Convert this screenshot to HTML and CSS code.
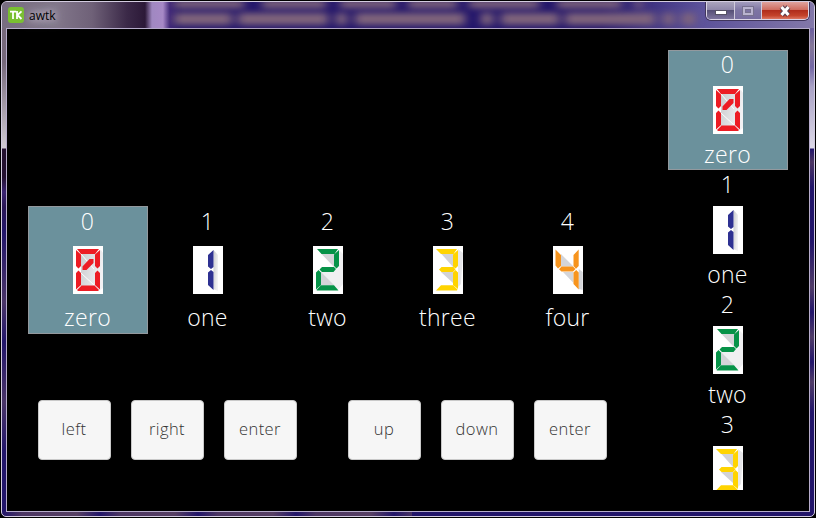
FILE: index.html
```html
<!DOCTYPE html>
<html lang="en">
<head>
<meta charset="utf-8">
<title>awtk</title>
<link rel="stylesheet" href="styles.css">
</head>
<body>
<svg class="defs" aria-hidden="true">
  <defs>
    <linearGradient id="shade" x1="0" y1="0" x2="1" y2="0.4"><stop offset="0" stop-color="#c9cacd"/><stop offset="1" stop-color="#f2f2f4"/></linearGradient>
    <symbol id="d0" viewBox="0 0 30 48">
      <path fill="#fff" d="M0 0h30v48H0z"/><path fill="url(#shade)" d="M8 8h13l7-4 2 3v35l-4 3H8z"/>
      <path stroke="#fff" d="M8 8l13 15M8 27l13 12"/>
      <path fill="#ed1c24" d="M4 3h22l-4 5H8zM3 4l5 4.500V20l-2.500 2.500L3 20zM27 4l-5 4.500V20l2.500 2.500L27 20zM3 27l2.500-2.500L8 27v12l-5 4.500zM27 27l-2.500-2.500L22 27v12l5 4.500zM4 44l4.500-4.500h13L26 44l-1 1H5zM9.500 24v-3.500l7-7.500h4v4l-7 7z"/>
    </symbol>
    <symbol id="d1" viewBox="0 0 30 48">
      <path fill="#fff" d="M0 0h30v48H0z"/><path fill="url(#shade)" d="M20.500 4l4.500 5v36l-4.500-2z"/>
      <path fill="#2e3192" d="M20.500 4v17L18 23l-3-2.500V9zM18 24l2.500 2v18L15 39V26.500z"/>
    </symbol>
    <symbol id="d2" viewBox="0 0 30 48">
      <path fill="#fff" d="M0 0h30v48H0z"/><path fill="#f0f0f2" d="M26 4l4 4v30l-5 6-17-5V26h12l6-5z"/><path fill="#d3d4d7" d="M8.500 8H21v13zM8 26l13 13H8z"/>
      <path fill="#069348" d="M4 3h21l-3.500 5H8.500zM26 4v16l-2.500 2.500L21 20V8.500zM6.500 23.500L9 21h12l2 2-2.500 3H9zM5.500 24L8 26.500V39l-5 4.500V26.500zM3.500 44L8 39.200h13l4.500 5.300H4z"/>
    </symbol>
    <symbol id="d3" viewBox="0 0 30 48">
      <path fill="#fff" d="M0 0h30v48H0z"/><path fill="#e6e6e9" d="M25 3l5 4-2 31-3 3V26z"/><path fill="#d1d2d6" d="M8.500 8H20v13zM8 26h12v11z"/>
      <path fill="#ffd400" d="M3 3h21l-3.500 5H8zM25 4v16l-2.500 2.500L20 20.500v-12zM6 23.500L8.500 21h12l2 2.500-2.500 2.500H8.500zM22.500 24l2.500 2.500V43l-5-4V26.500zM3 44.500L8 39.200h12l4.500 4.300-.5 1z"/>
    </symbol>
    <symbol id="d4" viewBox="0 0 30 48">
      <path fill="#fff" d="M0 0h30v48H0z"/><path fill="#d4d5d9" d="M8 8l12.500 12.500H8zM25.700 23l4 3v18l-4-1zM10 26h10.500v11z"/>
      <path fill="#f7941d" d="M2.500 3.500L8 9v11l-3 2.500-2.500-3zM25.700 3.500L20.500 9v11l2.500 2.700 2.700-2.700zM6 23.200L8.500 20.600H20l2.500 2.500-2.500 2.500H8.500zM23.200 24l2.500 2.500v17L20.500 38V26.500z"/>
    </symbol>
  </defs>
</svg>
<div class="window">
  <header class="titlebar">
    <svg class="glass" width="812" height="27" aria-hidden="true">
      <defs><filter id="soft" x="-10%" y="-80%" width="120%" height="260%"><feGaussianBlur stdDeviation="5 3"/></filter></defs>
      <g filter="url(#soft)" stroke="#80657c" fill="none">
        <path stroke-width="8" stroke-dasharray="70 18 64 14 56 12 49 12" d="M172 2H640"/>
        <path stroke-width="12" stroke-dasharray="58 6 90 8 11 8 110 16 12 8" d="M172 17H693"/>
      </g>
    </svg>
    <svg class="logo" viewBox="0 0 16 16"><rect width="16" height="16" rx="3" fill="#79bf31"/><path d="M2 4.700h6M5 4.700V12M9 4v8M13.500 4.300L9.500 8l4 4" fill="none" stroke="#fff" stroke-width="1.800"/></svg>
    <span class="caption">awtk</span>
    <div class="controls">
      <span class="ctl min"><svg width="12" height="6"><rect x=".5" y=".5" width="11" height="4" fill="#fff" stroke="#565264"/></svg></span>
      <span class="ctl max"><svg width="12" height="10"><path d="M2 2h8v6H2z" fill="none" stroke="#77718f" stroke-width="4"/><path d="M2 2h8v6H2z" fill="none" stroke="#b9b3cf" stroke-width="2"/></svg></span>
      <span class="ctl close"><svg width="14" height="12"><path d="M3.500 2l7 8M10.500 2l-7 8" fill="none" stroke="#594050" stroke-width="5"/><path d="M3.500 2l7 8M10.500 2l-7 8" fill="none" stroke="#fff" stroke-width="3"/></svg></span>
    </div>
  </header>
  <main class="client">
    <section class="left">
      <div class="row">
        <div class="item selected"><span>0</span><svg><use href="#d0"/></svg><span>zero</span></div>
        <div class="item"><span>1</span><svg><use href="#d1"/></svg><span>one</span></div>
        <div class="item"><span>2</span><svg><use href="#d2"/></svg><span>two</span></div>
        <div class="item"><span>3</span><svg><use href="#d3"/></svg><span>three</span></div>
        <div class="item"><span>4</span><svg><use href="#d4"/></svg><span>four</span></div>
      </div>
      <div class="buttons">
        <div class="group"><button>left</button><button>right</button><button>enter</button></div>
        <div class="group"><button>up</button><button>down</button><button>enter</button></div>
      </div>
    </section>
    <section class="column">
      <div class="item selected"><span>0</span><svg><use href="#d0"/></svg><span>zero</span></div>
      <div class="item"><span>1</span><svg><use href="#d1"/></svg><span>one</span></div>
      <div class="item"><span>2</span><svg><use href="#d2"/></svg><span>two</span></div>
      <div class="item"><span>3</span><svg><use href="#d3"/></svg></div>
    </section>
  </main>
</div>
</body>
</html>
```
FILE: styles.css
```css
* { box-sizing: border-box; }
body {
  margin: 0;
  padding: 1px;
  width: 816px;
  height: 518px;
  overflow: hidden;
  background: #000;
  font-family: "Open Sans", "Noto Sans", sans-serif;
}
.defs { position: absolute; width: 0; height: 0; }
.window {
  width: 814px;
  height: 516px;
  border: 1px solid #d3cce0;
  border-radius: 6px 6px 5px 5px;
  overflow: hidden;
  padding: 0 4px 4px;
  background:
    linear-gradient(#776a7c 0, #75687a 60px, #d0cbd3 146px, #23102f 147px, #23102f 175px, #3b2472 190px, #2a1655 205px, #22156a 230px, #4a3568 300px, #22156a 340px, #4a3568 400px, #22156a 450px) 0 0 / 5px 505px no-repeat,
    linear-gradient(#81779e 0, #6d609e 28px, #857898 44px, #7468a5 65px, #aaa3c6 85px, #ddd9e8 146px, #22156a 147px, #4c3663 160px, #22156a 185px, #22156a 240px, #503c68 285px, #22156a 310px, #503c68 335px, #22156a 360px, #503c68 380px, #22156a 410px) 100% 0 / 5px 505px no-repeat,
    repeating-linear-gradient(90deg, #22156a 0, #4c3663 20px, #574064 75px, #22156a 98px) 0 100% / 410px 5px no-repeat,
    #22156a;
}
.titlebar {
  position: relative;
  display: flex;
  align-items: flex-start;
  height: 26px;
  margin: 0 -4px;
  background: linear-gradient(90deg, #776d80 0, #81768a 55px, #6f6178 90px, #3b2948 125px, #2c1938 143px, #a088c1 150px, #a789c6 161px, #3c2477 168px, #22156a 178px, #22156a 600px, #5c529a 700px, #8378a9 812px);
}
.glass { position: absolute; left: 0; top: 0; }
.logo { position: relative; width: 16px; height: 16px; margin: 5px 0 0 6px; }
.caption {
  position: relative;
  margin: 4px 0 0 5px;
  font-size: 12px;
  line-height: 19px;
  color: #000;
  text-shadow: 0 0 7px #c9c2cf, 0 0 10px #b9b1c0, 0 0 12px #b9b1c0;
}
.controls {
  position: relative;
  display: flex;
  margin-left: auto;
  margin-right: 5px;
  width: 103px;
  height: 18px;
  border: 1px solid #dcd6e6;
  border-top: 0;
  border-radius: 0 0 5px 5px;
  overflow: hidden;
  box-shadow: 0 0 0 1px #40355c;
}
.ctl {
  display: flex;
  align-items: center;
  justify-content: center;
  background: linear-gradient(#aaa4bd 0, #8e86a8 48%, #575077 50%, #7d749d 100%);
}
.min { width: 28px; padding-top: 5px; border-right: 1px solid #d1cbdc; }
.max { width: 27px; border-right: 1px solid #d1cbdc; background: linear-gradient(#a39cbd, #7d74a3 50%, #776da0); }
.close { width: 46px; background: linear-gradient(#dfa39e 0, #cf6d60 45%, #b02d1c 50%, #c4432b 80%, #dc7763 100%); }
.client {
  display: flex;
  justify-content: space-between;
  height: 484px;
  padding: 21px 21px 20px;
  border: 1px solid #b6accb;
  background: #000;
}
.left { padding-top: 156px; width: 600px; }
.row { display: flex; }
.item {
  display: grid;
  width: 120px;
  height: 128px;
  grid-template-rows: 32px 64px 32px;
  justify-items: center;
  align-items: center;
  color: #fff;
  font-size: 23px;
  font-weight: 300;
  letter-spacing: .3px;
  flex: none;
}
.item span { padding: 0 1px 2px 0; line-height: 28px; }
.item svg { width: 30px; height: 48px; display: block; }
.selected { background: #6b919c; box-shadow: inset 0 0 0 1px #93999e; }
.column { width: 120px; height: 440px; overflow: hidden; }
.column .item { height: 120px; grid-template-rows: 30px 60px 30px; }
.buttons { display: flex; gap: 51px; padding: 66px 0 0 10px; }
.group { display: flex; gap: 20px; }
button {
  width: 73px;
  height: 60px;
  padding: 0 1px 2px 0;
  border: 1px solid #c9c9c9;
  border-radius: 4px;
  background: #f6f6f6;
  color: #333;
  font: 300 16.5px/24px "Open Sans", "Noto Sans", sans-serif;
  letter-spacing: .4px;
}
```
